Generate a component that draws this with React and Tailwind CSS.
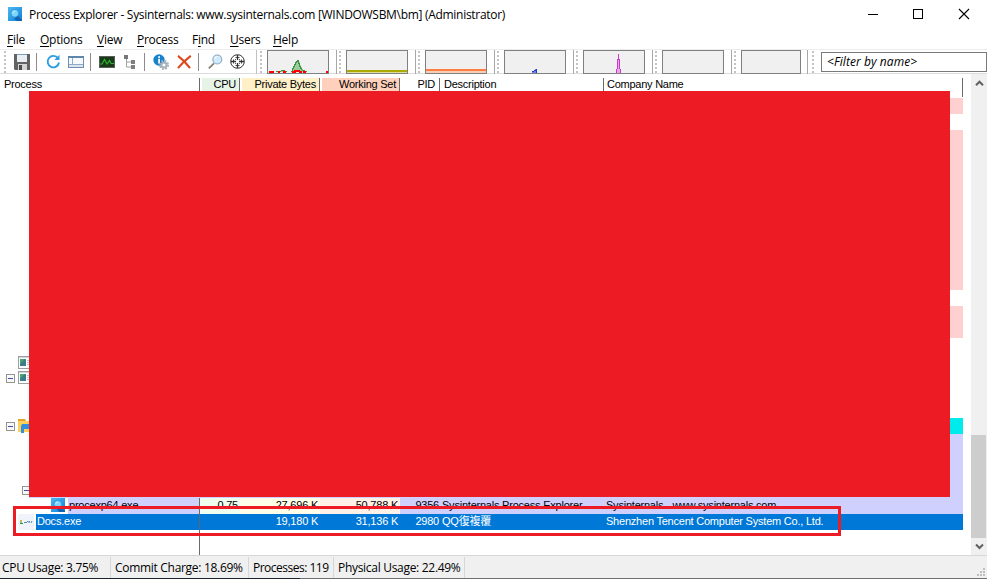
import React from "react";

const rowText = "font-['Liberation_Sans','Noto_Sans_CJK_SC',sans-serif] text-[11px] leading-[14px] tracking-[-0.22px] whitespace-nowrap";

function AppIcon({ className = "" }) {
  return (
    <svg className={className} width="14" height="14" viewBox="0 0 14 14">
      <defs>
        <linearGradient id="lens" x1="0" y1="0" x2="1" y2="1">
          <stop offset="0" stopColor="#4cb9f0" />
          <stop offset="1" stopColor="#1180d6" />
        </linearGradient>
      </defs>
      <rect width="14" height="14" fill="url(#lens)" />
      <path d="M9.500 9L14 13v1H8.500L6 11.500z" fill="#0c62b5" />
      <circle cx="6.800" cy="6.300" r="3.900" fill="#7fd6fa" stroke="#2b93dc" strokeWidth=".9" />
      <path d="M9.500 9.200l2.800 3" stroke="#1c6cb5" strokeWidth="1.700" />
      <path d="M4.600 6a2.400 2.400 0 0 1 2.400-2" stroke="#c8f0ff" fill="none" />
    </svg>
  );
}

const Menu = ({ k, rest, pre = "", className }) => (
  <div className={className}>
    {pre}
    <span className="underline underline-offset-2">{k}</span>
    {rest}
  </div>
);

const Divider = ({ className = "" }) => <div className={"h-[18px] w-px shrink-0 bg-[#8c8c8c] " + className} />;

const Grip = ({ className = "" }) => (
  <svg className={"shrink-0 " + className} width="3" height="24" viewBox="0 0 3 24">
    {[1, 5, 9, 13, 17, 21].map((y) => (
      <rect key={y} x="0" y={y} width="2" height="2" fill="#c2c2c2" />
    ))}
  </svg>
);

function Graph({ children, narrow }) {
  return (
    <div className="flex h-6 shrink-0">
      <Grip className="ml-[2px]" />
      <svg className="ml-[4px]" width={narrow ? 60 : 62} height="24" viewBox={narrow ? "0 0 60 24" : "0 0 62 24"} shapeRendering="crispEdges">
        <rect width="100%" height="24" fill="#808080" />
        <rect x="1" y="1" width={narrow ? 58 : 60} height="22" fill="#f0f0f0" />
        {children}
      </svg>
      <div className={narrow ? "ml-[6px] h-6 w-px bg-[#a8a8a8]" : "ml-[7px] h-6 w-px bg-[#a8a8a8]"} />
    </div>
  );
}

function Toolbar() {
  return (
    <div className="flex h-[25px] w-full shrink-0 border-t border-[#ececec] shadow-[inset_0_-1px_0_#dcdcdc]">
      <div className="flex h-[23px] w-[258px] shrink-0 items-center">
        <Grip className="ml-[4px]" />
        <svg className="ml-[7px]" width="16" height="16" viewBox="0 0 16 16">
          <path d="M0 0h16v16H1l-1-1z" fill="#636363" />
          <rect x="3" width="10" height="8" fill="#e9eef3" />
          <rect x="3" width="10" height="1" fill="#7c9cba" />
          <rect x="4" y="10" width="9" height="6" fill="#d4d4d4" />
          <rect x="5" y="11" width="3" height="5" fill="#4c4c4c" />
        </svg>
        <Divider className="ml-[6px]" />
        <svg className="ml-[9px]" width="15" height="16" viewBox="0 0 15 16" fill="none">
          <path d="M12 4.300A5.700 5.700 0 1 0 13 8.500" stroke="#2f9de3" strokeWidth="1.900" />
          <path d="M13.500 .8v5.200H8.300z" fill="#2f9de3" />
        </svg>
        <svg className="ml-[7px]" width="16" height="12" viewBox="0 0 16 12" shapeRendering="crispEdges">
          <rect x=".5" y=".5" width="15" height="11" fill="#f7f9fb" stroke="#6d8fb3" />
          <rect width="16" height="2" fill="#5f86ad" />
          <path d="M1 8.500h14M4.500 2v7" stroke="#8fabc7" fill="none" />
          <rect x="1" y="9" width="14" height="2" fill="#dbe4ed" />
        </svg>
        <Divider className="ml-[6px]" />
        <svg className="ml-[8px]" width="16" height="12" viewBox="0 0 16 12" fill="none">
          <rect x=".5" y=".5" width="15" height="11" fill="#173a17" stroke="#5b5b5b" />
          <path d="M1 8h2l2.500-4.500L8 8l2.500-3.500L12 7.500h3" stroke="#35b037" strokeWidth="1.200" />
        </svg>
        <svg className="ml-[9px]" width="11" height="14" viewBox="0 0 11 14">
          <path d="M2.500 3v9H7M2.500 7H7" stroke="#a0a0a0" fill="none" />
          <rect width="4" height="4" fill="#777" />
          <rect x="7" y="5" width="4" height="4" fill="#808080" />
          <rect x="7" y="10" width="4" height="4" fill="#808080" />
        </svg>
        <Divider className="ml-[9px]" />
        <svg className="ml-[8px]" width="16" height="16" viewBox="0 0 16 16">
          <circle cx="6" cy="6" r="5.700" fill="#1683cf" />
          <rect x="5.200" y="2.200" width="1.800" height="1.700" fill="#fff" />
          <rect x="5.200" y="4.800" width="1.800" height="4.800" fill="#fff" />
          <circle cx="11" cy="11" r="4.200" fill="none" stroke="#a5b0ba" strokeWidth="1.600" strokeDasharray="1.900 1.400" />
          <circle cx="11" cy="11" r="2.600" fill="#fff" stroke="#a5b0ba" strokeWidth="2" />
        </svg>
        <svg className="ml-[8px]" width="15" height="14" viewBox="0 0 15 14" fill="none">
          <path d="M1 .8c4 3 8.500 7.500 12 12.400M13.800.8C8.800 4.600 4.500 8.500 1 13.200" stroke="#db4a1c" strokeWidth="2.100" />
        </svg>
        <Divider className="ml-[6px]" />
        <svg className="ml-[9px]" width="15" height="15" viewBox="0 0 15 15" fill="none">
          <path d="M6 9.300L.8 14.300" stroke="#857e74" strokeWidth="1.800" />
          <circle cx="9.300" cy="5.500" r="4.500" fill="#cfeafa" stroke="#86a6c2" strokeWidth="1.100" />
          <path d="M6.800 5a3 3 0 0 1 3-2.500" stroke="#fff" />
        </svg>
        <svg className="ml-[7px]" width="16" height="16" viewBox="0 0 16 16" fill="none" stroke="#333">
          <circle cx="7.500" cy="7.500" r="6.800" strokeWidth="1" />
          <path d="M7.500 1v5M7.500 9v5M1 7.500h5M9 7.500h5" strokeWidth="1.300" />
          <path d="M5.500 3.500h4M5.500 11.500h4M3.500 5.500v4M11.500 5.500v4" strokeWidth=".9" />
          <path d="M5 5l1 1M10 5L9 6M5 10l1-1M10 10L9 9" strokeWidth=".8" />
        </svg>
        <div className="mr-px ml-auto h-6 w-px shrink-0 bg-[#c0c0c0]" />
      </div>
      <div className="flex shrink-0">
        <Graph>
          <path d="M9 22l5-1h4l2 1zM24 22l3-6 2-5h3l2 5 2 4 3 2z" fill="#9ccb9f" />
          <path d="M9 21.500h5M14 20.500h4M18 21.500h2M24 21.500h2M25.500 21v-3M26.500 19v-3M27.500 17v-3M28.500 15v-3M29.500 13v-2M30.500 12v-2M31.500 10v4M32.500 13v4M33.500 16v3M34.500 18v2M35 20.500h3M38 21.500h2" fill="none" stroke="#3a9443" />
          <path d="M2 22h5M11 22h2M16 22h3M25 22h4M27 21h4M30 20.500h3M32 22h3M36 22h3M59 22h2" stroke="#f00" strokeWidth="2" />
        </Graph>
        <Graph><rect x="1" y="20" width="60" height="2" fill="#aaaa00" /><rect x="1" y="22" width="60" height="1" fill="#dede9a" /></Graph>
        <Graph><rect x="1" y="19" width="60" height="2" fill="#ff7f40" /><rect x="1" y="21" width="60" height="2" fill="#f8cdb8" /></Graph>
        <Graph><path d="M28 23v-2h2v-1h1v-1h1v2h1v2z" fill="#6d84e8" /><path d="M28 21h2v1h-2zM30 20h2v-1h1v2h-3zM32 21h1v2h-1z" fill="#2038c8" /></Graph>
        <Graph><path d="M33 23v-4h1V9h3v10h1v4z" fill="#eda6eb" /><path d="M35 4h1v5h1v10h1v4h-1v-4h-1V10h-1v9h-1v4h-1v-4h1V9h1z" fill="#c73bcb" /></Graph>
        <Graph />
        <Graph narrow />
      </div>
      <Grip className="ml-[4px]" />
      <div className="mt-[2px] ml-[6px] flex h-5 flex-1 items-center border border-[#7a7a7a] bg-white pl-[5px]">
        <span className="font-['Open_Sans',sans-serif] text-[12px] leading-[18px] tracking-[0.07px] whitespace-nowrap italic">&lt;Filter by name&gt;</span>
      </div>
    </div>
  );
}

const headLine = <div className="h-[19px] w-px shrink-0 bg-[#6a6a6a]" />;

function Header() {
  return (
    <div className="flex h-[24px] shrink-0 pt-[4px] font-['Liberation_Sans',sans-serif] text-[11px] leading-[13px] tracking-[-0.25px] whitespace-nowrap">
      <div className="w-[199px] pl-[4px]">Process</div>
      {headLine}
      <div className="ml-[2px] h-[14px] w-[37px] bg-[#e8f3e8] pr-[3px] text-right">CPU</div>
      {headLine}
      <div className="ml-[2px] h-[14px] w-[77px] bg-[#fff0c8] pr-[3px] text-right">Private Bytes</div>
      {headLine}
      <div className="ml-[2px] h-[14px] w-[77px] bg-[#ffd0bc] pr-[3px] text-right">Working Set</div>
      {headLine}
      <div className="w-[39px] pr-[4px] text-right">PID</div>
      {headLine}
      <div className="w-[163px] pl-[4px]">Description</div>
      {headLine}
      <div className="w-[358px] pl-[3px]">Company Name</div>
      {headLine}
    </div>
  );
}

const Expander = () => (
  <svg width="9" height="9" viewBox="0 0 9 9" shapeRendering="crispEdges">
    <rect width="9" height="9" fill="#959595" />
    <rect x="1" y="1" width="7" height="7" fill="#f8f8f8" />
    <rect x="2" y="4" width="5" height="1" fill="#3c53a5" />
  </svg>
);

const WindowIcon = () => (
  <svg className="shrink-0" width="16" height="13" viewBox="0 0 16 13">
    <rect x=".5" y=".5" width="15" height="12" fill="#fff" stroke="#98a0a6" />
    <rect x="1" y="1" width="14" height="1" fill="#cfd4d8" />
    <rect x="2" y="3" width="6" height="7" fill="#3c7d8c" />
    <path d="M2 3h5l-5 5z" fill="#48a468" />
    <path d="M9 4.500h5M9 6.500h5M9 8.500h5" stroke="#bcc5cc" />
  </svg>
);

const FolderIcon = () => (
  <svg className="shrink-0" width="15" height="14" viewBox="0 0 15 14">
    <path d="M0 0h7l1 2h7v11H0z" fill="#e0a526" />
    <path d="M0 2h15v11H0z" fill="#fcd05a" />
    <path d="M3 14V7l1-2h10l1 2v7h-3v-4H6v4z" fill="#2f8fe0" />
  </svg>
);

const bands = [
  "h-[16px] bg-[#ffd0d0]",
  "h-[16px]",
  "h-[160px] bg-[#ffd0d0]",
  "h-[16px]",
  "h-[32px] bg-[#ffd0d0]",
  "h-[80px]",
  "h-[16px] bg-[#00ebeb]",
  "h-[64px] bg-[#d0d0ff]",
];

function ProcessList() {
  return (
    <div className="relative flex h-[481px] shrink-0 bg-white">
      <div className="w-[963px] shrink-0">
        <Header />
        <div className="flex h-[400px]">
          <div className="w-[29px] shrink-0">
            <div className="mt-[257px] flex h-[16px] pt-[1px] pl-[18px]"><WindowIcon /></div>
            <div className="flex h-[16px] gap-[3px] pl-[6px]"><div className="pt-[3px]"><Expander /></div><WindowIcon /></div>
            <div className="mt-[32px] flex h-[16px] gap-[3px] pl-[6px]"><div className="pt-[3px]"><Expander /></div><FolderIcon /></div>
            <div className="mt-[51px] pl-[22px]"><Expander /></div>
          </div>
          <div className="flex-1">{bands.map((b, i) => <div key={i} className={b} />)}</div>
        </div>
        <div className={"flex h-[16px] " + rowText}>
          <div className="flex w-[199px] shrink-0 pl-[51px]">
            <AppIcon />
            <div className="ml-[3px] flex-1 bg-[#d0d0ff] pl-px">procexp64.exe</div>
          </div>
          <div className="w-px bg-[#6a6a6a]" />
          <div className="w-[40px] bg-[#efffef] pr-[2px] text-right">0.75</div>
          <div className="w-[80px] bg-[#ffffea] pr-[2px] text-right">27,696 K</div>
          <div className="w-[80px] bg-[#fff0e8] pr-[2px] text-right">50,788 K</div>
          <div className="flex flex-1 bg-[#d0d0ff]">
            <div className="w-[39px] text-right">9356</div>
            <div className="w-[167px] pl-[3px]">Sysinternals Process Explorer</div>
            <div>Sysinternals - www.sysinternals.com</div>
          </div>
        </div>
        <div className={"flex h-[16px] text-white " + rowText}>
          <svg className="ml-[18px] shrink-0" width="16" height="16" viewBox="0 0 16 16">
            <rect width="16" height="16" fill="#f1f3fa" />
            <path d="M2 6h2v1H2z" fill="#e8b21c" />
            <path d="M3 7v2M2 9.500h3" stroke="#34903f" />
            <path d="M6 9l1-1 1 1M8 9l2-2M11 9V7l1 1M13 9l1-2" stroke="#2f6d91" fill="none" strokeWidth=".8" />
          </svg>
          <div className="ml-[2px] w-[163px] shrink-0 bg-[#0078d7] pl-px">Docs.exe</div>
          <div className="w-px bg-[#5f6670]" />
          <div className="flex flex-1 bg-[#0078d7]">
            <div className="w-[118px] text-right">19,180 K</div>
            <div className="w-[80px] text-right">31,136 K</div>
            <div className="w-[41px] text-right">2980</div>
            <div className="w-[167px] pl-[3px]">QQ復複覆</div>
            <div>Shenzhen Tencent Computer System Co., Ltd.</div>
          </div>
        </div>
        <div className="ml-[199px] h-[25px] w-px bg-[#6a6a6a]" />
      </div>
      <div className="ml-[8px] flex w-[16px] flex-col items-center bg-[#f0f0f0]">
        <svg className="mt-[6px]" width="9" height="7" viewBox="0 0 9 7"><path d="M1 5.200l3.500-3.500L8 5.200" stroke="#606060" strokeWidth="2" fill="none" /></svg>
        <div className="mt-[348px] h-[103px] w-[15px] self-start bg-[#cdcdcd]" />
        <svg className="mt-[5px]" width="9" height="7" viewBox="0 0 9 7"><path d="M1 1.500L4.500 5 8 1.500" stroke="#606060" strokeWidth="2" fill="none" /></svg>
      </div>
      {/* redaction block and highlight frame laid over the rows */}
      <div className="absolute top-[17px] left-[29px] h-[406px] w-[921px] bg-[#ed1c24]" />
      <div className="absolute top-[432px] left-[13px] h-[30px] w-[828px] border-[3px] border-[#ed1c24]" />
    </div>
  );
}

const Cell = ({ className, children }) => (
  <div className={"h-[21px] shrink-0 border-r border-[#d7d7d7] " + className}>{children}</div>
);

export default function App() {
  return (
    <div className="flex h-[579px] w-[987px] flex-col overflow-hidden bg-white font-['Open_Sans',sans-serif] text-[12px] text-black">
      <div className="flex h-[30px] shrink-0 items-center">
        <AppIcon className="-mt-[3px] ml-[8px]" />
        <span className="ml-[7px] tracking-[-0.3px] whitespace-nowrap">Process Explorer - Sysinternals: www.sysinternals.com [WINDOWSBM\bm] (Administrator)</span>
        <svg className="-mt-[2px] mr-[17px] ml-auto" width="102" height="12" viewBox="0 0 102 12" fill="none" stroke="#000">
          <path d="M0 6.500h10" />
          <rect x="45.500" y="1.500" width="9" height="9" />
          <path d="M91 1l10 10M101 1L91 11" strokeWidth="1.100" />
        </svg>
      </div>
      <div className="flex h-[19px] shrink-0 pl-[7px] leading-[20px] tracking-[-0.25px] whitespace-nowrap">
        <Menu className="w-[33px]" k="F" rest="ile" />
        <Menu className="w-[57px]" k="O" rest="ptions" />
        <Menu className="w-[40px]" k="V" rest="iew" />
        <Menu className="w-[55px]" k="P" rest="rocess" />
        <Menu className="w-[38px]" pre="F" k="i" rest="nd" />
        <Menu className="w-[43px]" k="U" rest="sers" />
        <Menu className="w-[40px]" k="H" rest="elp" />
      </div>
      <Toolbar />
      <ProcessList />
      <div className="flex h-[23px] shrink-0 border-t border-[#d7d7d7] bg-[#f0f0f0] pt-px leading-[22px] tracking-[-0.3px] whitespace-nowrap">
        <Cell className="w-[111px] pl-[2px]">CPU Usage: 3.75%</Cell>
        <Cell className="w-[138px] pl-[4px]">Commit Charge: 18.69%</Cell>
        <Cell className="w-[85px] pl-[4px] tracking-[-0.5px]">Processes: 119</Cell>
        <Cell className="w-[131px] pl-[4px]">Physical Usage: 22.49%</Cell>
        <svg className="mt-auto mr-[2px] mb-[2px] ml-auto" width="8" height="8" viewBox="0 0 8 8" fill="#bfbfbf">
          <path d="M6 0h2v2H6zM3 3h2v2H3zM6 3h2v2H6zM0 6h2v2H0zM3 6h2v2H3zM6 6h2v2H6z" />
        </svg>
      </div>
      <div className="flex h-px shrink-0 bg-[#707070]"><div className="w-[300px] bg-[#1b2430]" /></div>
    </div>
  );
}
